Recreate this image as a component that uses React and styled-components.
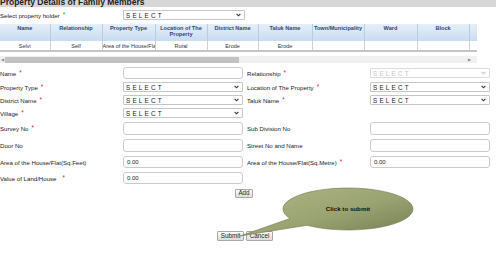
import React from "react";
import styled, { createGlobalStyle } from "styled-components";

const GlobalStyle = createGlobalStyle`
  html, body { margin: 0; padding: 0; background: #fff; overflow: hidden; }
  body { font-family: "Liberation Sans", Arial, sans-serif; }
`;

const Page = styled.div`
  position: relative;
  width: 496px;
  height: 261px;
  overflow: hidden;
  font-size: 6.1px;
  color: #222;
`;

const TitleBar = styled.div`
  height: 7px;
  background: #d7d7d7;
  overflow: hidden;
`;

const Title = styled.div`
  margin-top: -2px;
  font-size: 8.5px;
  line-height: 8.5px;
  font-weight: bold;
  color: #1c1c1c;
  white-space: nowrap;
`;

const HolderRow = styled.div`
  display: flex;
  align-items: center;
  height: 10px;
  margin-top: 3px;
`;

const HolderLabel = styled.div`
  width: 123px;
  white-space: nowrap;
`;

const Star = styled.span`
  color: ${(p) => (p.$green ? "#2e9a2e" : "#e02424")};
  margin-left: ${(p) => p.$gap || 3}px;
  position: relative;
  top: -1px;
  font-size: 6.4px;
`;

const Grid = styled.table`
  margin-top: 4px;
  width: 477px;
  border-collapse: collapse;
  table-layout: fixed;
  border-bottom: 2px solid #c4c4c4;
`;

const Th = styled.th`
  height: 17px;
  padding: 1px 1px 0;
  box-sizing: border-box;
  vertical-align: top;
  text-align: center;
  font-weight: bold;
  font-size: 5.6px;
  line-height: 6.2px;
  color: #34466a;
  background: linear-gradient(#e5effa, #c8dbf1);
  border-left: 1px solid #b8cce2;
  &:first-child { border-left: none; }
`;

const Td = styled.td`
  height: 9px;
  padding: 0;
  text-align: center;
  font-size: 5.5px;
  color: #333;
  border-left: 1px solid #d0d0d0;
  white-space: nowrap;
  overflow: hidden;
  &:first-child { border-left: none; }
`;

const ScrollBar = styled.div`
  margin-top: 4px;
  width: 477px;
  height: 7px;
  background: #f0f0f0;
  display: flex;
  align-items: center;
`;

const ScrollArrow = styled.span`
  width: 5px;
  font-size: 4px;
  color: #8a8a8a;
  text-align: center;
  line-height: 7px;
  margin-left: ${(p) => (p.$right ? "auto" : "0")};
  margin-right: ${(p) => (p.$right ? "5px" : "0")};
`;

const Thumb = styled.div`
  width: 234px;
  height: 6px;
  background: #c2c2c2;
`;

const Form = styled.div`
  margin-top: 4px;
`;

const FormRow = styled.div`
  display: grid;
  grid-template-columns: 123px 120px 4px 123px 120px;
  align-items: center;
  height: ${(p) => p.$h}px;
  margin-top: ${(p) => p.$mt || 0}px;
`;

const Label = styled.div`
  white-space: nowrap;
  grid-column: ${(p) => (p.$right ? 4 : 1)};
`;

const Select = styled.div`
  grid-column: ${(p) => (p.$right ? 5 : 2)};
  width: ${(p) => p.$w || 120}px;
  height: 10px;
  box-sizing: border-box;
  border: 1px solid ${(p) => (p.$disabled ? "#dcdcdc" : "#c6c6c6")};
  border-radius: 1px;
  background: #fff;
  display: flex;
  align-items: center;
  justify-content: space-between;
  padding: 0 3px 0 2px;
  font-size: 6.3px;
  letter-spacing: 2.2px;
  color: ${(p) => (p.$disabled ? "#c4c4c4" : "#1a1a1a")};
`;

const Input = styled.div`
  grid-column: ${(p) => (p.$right ? 5 : 2)};
  align-self: stretch;
  width: 120px;
  box-sizing: border-box;
  border: 1px solid #cbcbcb;
  border-radius: 3px;
  background: #fff;
  display: flex;
  align-items: center;
  padding-left: 3px;
  font-size: 6px;
  color: #222;
`;

const AddRow = styled.div`
  margin-top: 5px;
  padding-left: 235px;
  display: flex;
`;

const ActionRow = styled.div`
  margin-top: 33px;
  width: 490px;
  display: flex;
  justify-content: center;
  gap: 2px;
`;

const Button = styled.button`
  height: ${(p) => p.$h || 10}px;
  width: ${(p) => p.$w}px;
  padding: 0;
  box-sizing: border-box;
  font-family: inherit;
  font-size: 6.3px;
  line-height: 1;
  color: #222;
  border: 1px solid #a9a9a9;
  border-radius: 1px;
  background: linear-gradient(#fdfdfd, #dcdcdc);
`;

const Bubble = styled.svg`
  position: absolute;
  left: 236px;
  top: 186px;
  z-index: 2;
  overflow: visible;
`;

const Chevron = ({ color }) => (
  <svg width="5" height="4" viewBox="0 0 5 4">
    <path d="M0.6 0.8 L2.5 2.8 L4.4 0.8" fill="none" stroke={color} strokeWidth="1.1" />
  </svg>
);

const Sel = ({ right, disabled, w }) => (
  <Select $right={right} $disabled={disabled} $w={w}>
    <span>SELECT</span>
    <Chevron color={disabled ? "#c4c4c4" : "#333"} />
  </Select>
);

const cols = [50, 52, 53, 52, 51, 54, 52, 53, 52, 8];
const heads = [
  "Name",
  "Relationship",
  "Property Type",
  "Location of The Property",
  "District Name",
  "Taluk Name",
  "Town/Municipality",
  "Ward",
  "Block",
  "",
];
const row = ["Selvi", "Self", "Area of the House/Flat", "Rural", "Erode", "Erode", "", "", "", ""];

export default function App() {
  return (
    <Page>
      <GlobalStyle />
      <TitleBar>
        <Title>Property Details of Family Members</Title>
      </TitleBar>

      <HolderRow>
        <HolderLabel>
          Select property holder<Star $green>*</Star>
        </HolderLabel>
        <Sel w={122} />
      </HolderRow>

      <Grid>
        <colgroup>
          {cols.map((w, i) => (
            <col key={i} style={{ width: w }} />
          ))}
        </colgroup>
        <thead>
          <tr>
            {heads.map((h, i) => (
              <Th key={i}>{h}</Th>
            ))}
          </tr>
        </thead>
        <tbody>
          <tr>
            {row.map((c, i) => (
              <Td key={i}>{c}</Td>
            ))}
          </tr>
        </tbody>
      </Grid>

      <ScrollBar>
        <ScrollArrow>◀</ScrollArrow>
        <Thumb />
        <ScrollArrow $right>▶</ScrollArrow>
      </ScrollBar>

      <Form>
        <FormRow $h={12}>
          <Label>
            Name<Star>*</Star>
          </Label>
          <Input />
          <Label $right>
            Relationship<Star>*</Star>
          </Label>
          <Sel right disabled />
        </FormRow>
        <FormRow $h={10} $mt={3}>
          <Label>
            Property Type<Star>*</Star>
          </Label>
          <Sel />
          <Label $right>
            Location of The Property<Star>*</Star>
          </Label>
          <Sel right />
        </FormRow>
        <FormRow $h={10} $mt={3}>
          <Label>
            District Name<Star>*</Star>
          </Label>
          <Sel />
          <Label $right>
            Taluk Name<Star>*</Star>
          </Label>
          <Sel right />
        </FormRow>
        <FormRow $h={10} $mt={3}>
          <Label>
            Village<Star>*</Star>
          </Label>
          <Sel />
        </FormRow>
        <FormRow $h={13} $mt={4}>
          <Label>
            Survey No<Star>*</Star>
          </Label>
          <Input />
          <Label $right>Sub Division No</Label>
          <Input $right />
        </FormRow>
        <FormRow $h={13} $mt={4}>
          <Label>Door No</Label>
          <Input />
          <Label $right>Street No and Name</Label>
          <Input $right />
        </FormRow>
        <FormRow $h={12} $mt={4}>
          <Label>Area of the House/Flat(Sq.Feet)</Label>
          <Input>0.00</Input>
          <Label $right>
            Area of the House/Flat(Sq.Metre)<Star>*</Star>
          </Label>
          <Input $right>0.00</Input>
        </FormRow>
        <FormRow $h={12} $mt={4}>
          <Label>
            Value of Land/House<Star $gap={6}>*</Star>
          </Label>
          <Input>0.00</Input>
        </FormRow>
      </Form>

      <AddRow>
        <Button $w={18} $h={9}>Add</Button>
      </AddRow>

      <ActionRow>
        <Button $w={27}>Submit</Button>
        <Button $w={27}>Cancel</Button>
      </ActionRow>

      <Bubble width="180" height="52" viewBox="0 0 180 52">
        <defs>
          <linearGradient id="bub" x1="0" y1="0" x2="1" y2="1">
            <stop offset="0" stopColor="#b0b885" />
            <stop offset="0.55" stopColor="#99a271" />
            <stop offset="1" stopColor="#737d50" />
          </linearGradient>
        </defs>
        <path
          d="M54 32.5 A65 21 0 1 1 71 39.3 L4 50 Z"
          fill="url(#bub)"
          stroke="#6f784d"
          strokeWidth="0.6"
        />
        <text
          x="112"
          y="24.5"
          textAnchor="middle"
          fontFamily="Liberation Sans, Arial, sans-serif"
          fontWeight="bold"
          fontSize="6.2"
          fill="#111"
        >
          Click to submit
        </text>
      </Bubble>
    </Page>
  );
}
